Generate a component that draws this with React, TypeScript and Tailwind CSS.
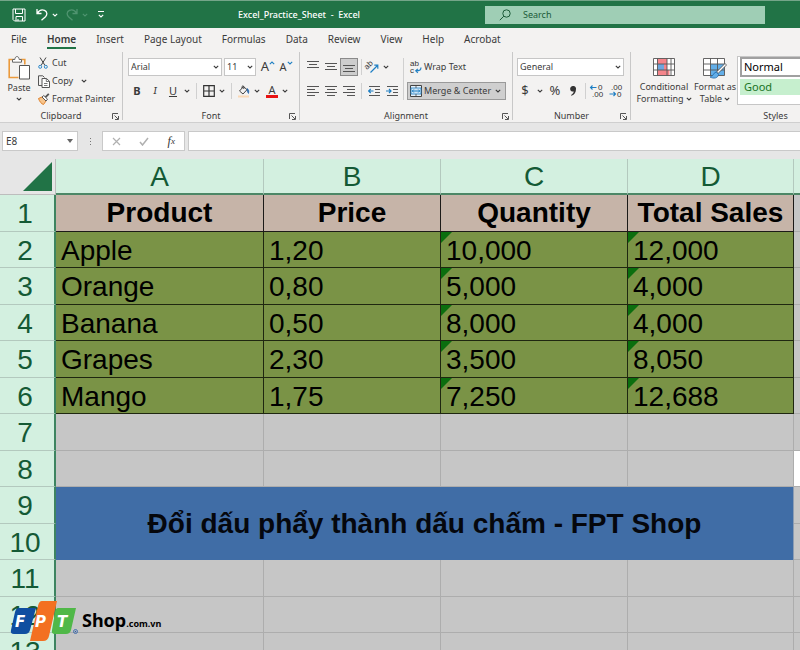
import { ReactNode } from 'react'
import clsx from 'clsx'

const tabs = ['File', 'Home', 'Insert', 'Page Layout', 'Formulas', 'Data', 'Review', 'View', 'Help', 'Acrobat']

const columns = ['A', 'B', 'C', 'D']

const products = [
  ['Apple', '1,20', '10,000', '12,000'],
  ['Orange', '0,80', '5,000', '4,000'],
  ['Banana', '0,50', '8,000', '4,000'],
  ['Grapes', '2,30', '3,500', '8,050'],
  ['Mango', '1,75', '7,250', '12,688'],
]

/* ---------- icons ---------- */

function Chevron({ className }: { className?: string }) {
  return (
    <svg viewBox="0 0 6 4" className={clsx('h-1 w-1.5 shrink-0', className)} fill="none" stroke="currentColor" strokeWidth="1.1">
      <path d="M0.8 0.8 3 3 5.2 0.8" />
    </svg>
  )
}

function SaveIcon() {
  return (
    <svg viewBox="0 0 14 14" className="h-3.5 w-3.5" fill="none" stroke="currentColor">
      <path d="M1 1h12v12H2.5L1 11.5z" />
      <path d="M3.5 1v4.5h7V1M4 13V8.5h6.5V13M6 13v-2" />
    </svg>
  )
}

function UndoIcon({ flip }: { flip?: boolean }) {
  return (
    <svg viewBox="0 0 12 13" className={clsx('h-[13px] w-3', flip && '-scale-x-100')} fill="none" stroke="currentColor" strokeWidth="1.3">
      <path d="M1 1v4.5h4.5M1.3 5.3C3 2.6 6 1.4 8.5 2.4c2.800 1.200 3 4.300 1 6.300L5.500 12.300" />
    </svg>
  )
}

function SearchIcon() {
  return (
    <svg viewBox="0 0 12 12" className="h-3 w-3" fill="none" stroke="currentColor">
      <circle cx="7.500" cy="4.500" r="3.700" />
      <path d="M4.800 7.200 0.800 11.200" />
    </svg>
  )
}

function PasteIcon() {
  return (
    <svg viewBox="0 0 22 24" className="h-6 w-[22px]" fill="none">
      <path d="M6 3.500H1.200v18h9.300M12.500 3.500h4.300v5" stroke="#eb9a3c" strokeWidth="1.600" />
      <path d="M4.500 6.200V3.500h2.300C7 1.500 7.800.6 9 .6s2 .9 2.200 2.900h2.300v2.700z" fill="#fff" stroke="#666" />
      <path d="M11.500 9.500h10V23h-10z" fill="#fff" stroke="#555" />
    </svg>
  )
}

function CutIcon() {
  return (
    <svg viewBox="0 0 10 12" className="h-3 w-2.5" fill="none">
      <path d="M2 .5 7 8.500M8 .5 3 8.500" stroke="#444" />
      <circle cx="2.200" cy="9.800" r="1.500" stroke="#2a86c8" />
      <circle cx="7.800" cy="9.800" r="1.500" stroke="#2a86c8" />
    </svg>
  )
}

function CopyIcon() {
  return (
    <svg viewBox="0 0 12 13" className="h-[13px] w-3" fill="none" stroke="#555">
      <path d="M4 10.500H.5V.8h4.300l1.700 1.700" />
      <path d="M4 3.500h4.500L11.500 6.300v6.200H4z" fill="#fff" />
      <path d="M8.300 3.500v3h3M6 8.500h3.500M6 10.500h3.500" strokeWidth=".8" />
    </svg>
  )
}

function PainterIcon() {
  return (
    <svg viewBox="0 0 12 12" className="h-3 w-3" fill="none">
      <path d="M.5 5.500 4 4l4 4-2.500 3.500C3.500 11 1.500 8.500.5 5.500z" fill="#f6c48c" stroke="#e0812a" />
      <path d="m4 4 1.800-1.500 3.700 3.700L8 8z" fill="#fff" stroke="#555" />
      <path d="M7.500 4.200 10.800.8" stroke="#555" strokeWidth="1.800" />
    </svg>
  )
}

function BordersIcon() {
  return (
    <svg viewBox="0 0 12 12" className="h-3 w-3" fill="none" stroke="#333" strokeWidth="1.200">
      <path d="M.7.7h10.600v10.600H.7zM6 .7v10.600M.7 6h10.600" />
    </svg>
  )
}

function FillIcon() {
  return (
    <svg viewBox="0 0 12 13" className="h-[13px] w-3" fill="none">
      <path d="M5.500 1.500 1.500 6l3.500 3 4-4.300zM4 3.300V1.500q1-1.500 1.800 0v2.500" stroke="#444" />
      <path d="M9 3.500c1.700.8 2.200 2.500 1.500 5-.8-1-1.300-2-1.500-5z" fill="#1d5fa8" stroke="#1d5fa8" strokeWidth=".6" />
      <path d="M0 11.500h11" stroke="#fbd9b5" strokeWidth="2" />
    </svg>
  )
}

function Lines({ rows }: { rows: [number, number][] }) {
  return (
    <svg viewBox="0 0 12 12" className="h-3 w-3" stroke="#555" strokeWidth="1">
      {rows.map(([from, to], i) => (
        <path key={i} d={`M${from} ${i * 3 + 1.5}H${to}`} />
      ))}
    </svg>
  )
}

function IndentIcon({ right }: { right?: boolean }) {
  return (
    <svg viewBox="0 0 12 12" className="h-3 w-3" fill="none">
      <path d="M1 1.500h11M7 4.500h5M7 7.500h5M1 10.500h11" stroke="#555" />
      <path d={right ? 'M0 6h5M3 4l2 2-2 2' : 'M5.500 6H.7M2.700 4l-2 2 2 2'} stroke="#1e7fc4" strokeWidth="1.200" />
    </svg>
  )
}

function OrientationIcon() {
  return (
    <svg viewBox="0 0 14 14" className="size-3.5 overflow-visible" fill="none">
      <text x="2" y="10" fontSize="8" fontFamily="Liberation Sans" fill="#333" transform="rotate(-45 2 10)">
        ab
      </text>
      <path d="M5.500 12.500 12.500 5.500M9.300 5.200h3.500v3.500" stroke="#1e7fc4" strokeWidth="1.200" />
    </svg>
  )
}

function WrapIcon() {
  return (
    <svg viewBox="0 0 12 14" className="h-3.5 w-3 overflow-visible" fill="none">
      <text x="0" y="6" fontSize="8" fontFamily="Liberation Sans" fill="#333">
        ab
      </text>
      <text x="0" y="13" fontSize="8" fontFamily="Liberation Sans" fill="#333">
        c
      </text>
      <path d="M10.800 7.500c.5 2-.8 3.300-5 3.300M7.800 8.800l-2 2 2 2" stroke="#1e7fc4" strokeWidth="1.200" />
    </svg>
  )
}

function MergeIcon() {
  return (
    <svg viewBox="0 0 12 12" className="h-3 w-3" fill="none">
      <path d="M.5.5h11v11H.5z" fill="#e6f1f9" stroke="#444" />
      <path d="M1 3h10v6H1z" fill="#cfe6f6" stroke="#1e7fc4" strokeWidth=".8" />
      <path d="M6 .5V3M6 9v2.500" stroke="#444" strokeWidth=".8" />
      <path d="M2.200 6h7.600M3.800 4.500 2.300 6l1.500 1.500M8.200 4.500 9.700 6 8.200 7.500" stroke="#1e7fc4" />
    </svg>
  )
}

function DecimalIcon({ decrease }: { decrease?: boolean }) {
  return (
    <svg viewBox="0 0 13 14" className="h-3.5 w-[13px] overflow-visible" fill="none">
      <text x={decrease ? 2 : 8} y="6" fontSize="8" fontFamily="Liberation Sans" fill="#333">
        {decrease ? '.00' : '0'}
      </text>
      <text x={decrease ? 8 : 2} y="13" fontSize="8" fontFamily="Liberation Sans" fill="#333">
        {decrease ? '0' : '.00'}
      </text>
      <path d={decrease ? 'M.5 10h6M4.500 8l2 2-2 2' : 'M6.500 3.500h-6M2.500 1.500l-2 2 2 2'} stroke="#1e7fc4" strokeWidth="1.100" />
    </svg>
  )
}

function ConditionalIcon() {
  return (
    <svg viewBox="0 0 22 18" className="h-[18px] w-[22px]" fill="none">
      <path d="M.5.5h21v17H.5z" fill="#fff" />
      <path d="M4.500.5h9.500v5.500H4.500zM4.500 12h12v5.500h-12z" fill="#f5858b" />
      <path d="M4.500 6H11v6H4.500z" fill="#6ea6de" />
      <path d="M11 6h3v6h-3z" fill="#f5858b" />
      <path d="M.5.5h21v17H.5zM.5 6h21M.5 12h21M4.500.5v17M14 .5v17M18 .5v17" stroke="#555" strokeWidth=".9" />
    </svg>
  )
}

function FormatTableIcon() {
  return (
    <svg viewBox="0 0 24 21" className="h-[21px] w-6" fill="none">
      <path d="M.5.5h21v17H.5z" fill="#fff" />
      <path d="M7.500 6h14v11.500h-14z" fill="#62aee8" />
      <path d="M.5.5h21v17H.5zM.5 6h21M.5 12h21M7.500.5v17M14.500.5v17" stroke="#555" strokeWidth=".9" />
      <path d="M22 5.500 13.500 14l1.500 1.500L23.500 7z" fill="#fff" stroke="#444" strokeWidth=".8" />
      <path d="M13.500 14c-3 0-2.500 4-6.500 5 3.500 2 8 1.300 8.500-2.500z" fill="#62aee8" stroke="#1d66a8" strokeWidth=".8" />
    </svg>
  )
}

function LauncherIcon() {
  return (
    <svg viewBox="0 0 7 7" className="h-[7px] w-[7px]" fill="none" stroke="#555">
      <path d="M.5 6V.5H6M2.500 2.500l3.500 3.500M6.500 3v3.500H3" />
    </svg>
  )
}

/* ---------- ribbon parts ---------- */

type ButtonProps = { label: string; children: ReactNode; className?: string }

function IconButton({ label, children, className }: ButtonProps) {
  return (
    <button type="button" aria-label={label} className={clsx('flex h-[18px] shrink-0 items-center justify-center', className)}>
      {children}
    </button>
  )
}

function Divider({ className }: { className?: string }) {
  return <span className={clsx('h-4 w-px shrink-0 bg-[#d0d0d0]', className)} />
}

type GroupProps = { title: string; children: ReactNode; className?: string; launcher?: boolean }

function Group({ title, children, className, launcher = true }: GroupProps) {
  return (
    <section
      aria-label={title}
      className={clsx('relative flex h-[68px] shrink-0 flex-col justify-between border-r border-[#c8c8c8]', className)}
    >
      <div className="flex pt-1.5">{children}</div>
      <h2 className="text-center text-[9px] leading-2">{title}</h2>
      {launcher && (
        <button type="button" aria-label={`${title} settings`} className="absolute right-[3px] bottom-0">
          <LauncherIcon />
        </button>
      )}
    </section>
  )
}

function Dropdown({ label, value, className }: { label: string; value: string; className?: string }) {
  return (
    <span className={clsx('relative flex h-[18px] items-center border border-[#c6c6c6] bg-white', className)}>
      <select aria-label={label} defaultValue={value} className="h-full w-full appearance-none pl-0.5 text-[9px] outline-none">
        <option>{value}</option>
      </select>
      <Chevron className="pointer-events-none absolute right-0.5" />
    </span>
  )
}

function TitleBar() {
  return (
    <header className="flex h-7 shrink-0 items-center border-t border-[#74a589] bg-[#217346] text-white">
      <div className="flex w-[238px] shrink-0 items-center pl-3">
        <IconButton label="Save">
          <SaveIcon />
        </IconButton>
        <IconButton label="Undo" className="ml-2.5 gap-1">
          <UndoIcon />
          <Chevron />
        </IconButton>
        <IconButton label="Redo" className="ml-2 gap-1 text-[#4f9470]">
          <UndoIcon flip />
          <Chevron />
        </IconButton>
        <IconButton label="Customize toolbar" className="ml-2.5 flex-col gap-0.5">
          <span className="h-px w-1.5 bg-white" />
          <Chevron />
        </IconButton>
      </div>
      <h1 className="w-[247px] shrink-0 text-[9px] font-medium whitespace-pre">Excel_Practice_Sheet  -  Excel</h1>
      <label className="mr-[35px] flex h-[18px] min-w-0 flex-1 items-center gap-3 bg-[#9fceb5] pl-3.5 text-[#1c5b39]">
        <SearchIcon />
        <input
          type="search"
          aria-label="Search"
          placeholder="Search"
          className="min-w-0 flex-1 text-[9px] outline-none placeholder:text-[#1c5b39]"
        />
      </label>
    </header>
  )
}

function TabBar() {
  return (
    <nav className="flex h-6 shrink-0 items-center gap-5 pl-[11px] text-[10px] whitespace-nowrap">
      {tabs.map((tab) => (
        <a
          key={tab}
          href="#"
          className={clsx('border-b-2 leading-4', tab === 'Home' ? 'border-[#217346] font-semibold' : 'border-transparent')}
        >
          {tab}
        </a>
      ))}
    </nav>
  )
}

function Ribbon() {
  return (
    <div className="flex h-[71px] shrink-0 overflow-hidden border-b border-[#cfcfcf] text-[9px] whitespace-nowrap">
      <Group title="Clipboard" className="w-[123px]">
        <button type="button" className="-mt-0.5 flex w-[38px] flex-col items-center leading-3">
          <PasteIcon />
          <span className="mt-0.5">Paste</span>
          <Chevron className="mt-[3px]" />
        </button>
        <div className="-mt-1 flex flex-col">
          <button type="button" className="flex h-[18px] items-center gap-1">
            <CutIcon />
            Cut
          </button>
          <button type="button" className="flex h-[18px] items-center gap-0.5">
            <CopyIcon />
            Copy
            <Chevron className="ml-1.5" />
          </button>
          <button type="button" className="flex h-[18px] items-center gap-0.5">
            <PainterIcon />
            Format Painter
          </button>
        </div>
      </Group>

      <Group title="Font" className="w-[177px]">
        <div className="flex flex-col gap-1.5 pl-[5px]">
          <div className="flex gap-0.5">
            <Dropdown label="Font name" value="Arial" className="w-[94px]" />
            <Dropdown label="Font size" value="11" className="w-8" />
            <IconButton label="Increase font size" className="ml-0.5 w-4 text-[13px]">
              A<Chevron className="mb-2 rotate-180 text-[#1e7fc4]" />
            </IconButton>
            <IconButton label="Decrease font size" className="w-4 text-[11px]">
              A<Chevron className="mb-2 text-[#1e7fc4]" />
            </IconButton>
          </div>
          <div className="flex items-center">
            <IconButton label="Bold" className="w-[18px] text-[11px] font-bold">
              B
            </IconButton>
            <IconButton label="Italic" className="w-[18px] font-serif text-[11px] italic">
              I
            </IconButton>
            <IconButton label="Underline" className="w-[18px] text-[11px] underline">
              U
            </IconButton>
            <Chevron className="ml-0.5" />
            <Divider className="mx-1.5" />
            <IconButton label="Borders" className="gap-1">
              <BordersIcon />
              <Chevron />
            </IconButton>
            <Divider className="mx-1.5" />
            <IconButton label="Fill color" className="gap-1">
              <FillIcon />
              <Chevron />
            </IconButton>
            <IconButton label="Font color" className="ml-1.5 gap-1">
              <span className="h-[13px] w-3 border-b-3 border-[#e81313] text-[11px] leading-[10px]">A</span>
              <Chevron />
            </IconButton>
          </div>
        </div>
      </Group>

      <Group title="Alignment" className="w-[213px]">
        <div className="flex flex-col gap-1.5 pl-1">
          <div className="flex items-center">
            <IconButton label="Top align" className="w-[18px] pb-0.5">
              <Lines rows={[[0, 12], [2, 10], [0, 12]]} />
            </IconButton>
            <IconButton label="Middle align" className="w-[18px] pt-0.5">
              <Lines rows={[[0, 12], [2, 10], [0, 12]]} />
            </IconButton>
            <IconButton label="Bottom align" className="w-[18px] border border-[#8a8a8a] bg-[#cdcdcd] pt-1.5">
              <Lines rows={[[0, 12], [2, 10], [0, 12]]} />
            </IconButton>
            <Divider className="mx-[3px]" />
            <IconButton label="Orientation" className="gap-1">
              <OrientationIcon />
              <Chevron />
            </IconButton>
          </div>
          <div className="flex items-center">
            <IconButton label="Align left" className="w-[18px]">
              <Lines rows={[[0, 12], [0, 8], [0, 12], [0, 8]]} />
            </IconButton>
            <IconButton label="Center" className="w-[18px]">
              <Lines rows={[[0, 12], [2, 10], [0, 12], [2, 10]]} />
            </IconButton>
            <IconButton label="Align right" className="w-[18px]">
              <Lines rows={[[0, 12], [4, 12], [0, 12], [4, 12]]} />
            </IconButton>
            <Divider className="mx-[3px]" />
            <IconButton label="Decrease indent" className="w-[18px]">
              <IndentIcon />
            </IconButton>
            <IconButton label="Increase indent" className="w-[18px]">
              <IndentIcon right />
            </IconButton>
          </div>
        </div>
        <div className="ml-0.5 flex flex-col gap-1.5 border-l border-[#d0d0d0] pl-[3px]">
          <button type="button" className="flex h-[18px] items-center gap-0.5 pl-[3px]">
            <WrapIcon />
            Wrap Text
          </button>
          <button type="button" className="flex h-[18px] w-[99px] items-center gap-0.5 border border-[#9a9a9a] bg-[#cfcfcf] pl-0.5">
            <MergeIcon />
            Merge &amp; Center
            <Chevron className="mr-1 ml-auto" />
          </button>
        </div>
      </Group>

      <Group title="Number" className="w-[118px]">
        <div className="flex flex-col gap-1.5 pl-1">
          <Dropdown label="Number format" value="General" className="w-[107px]" />
          <div className="flex items-center">
            <IconButton label="Currency" className="w-4 text-[13px]">
              $
            </IconButton>
            <Chevron className="ml-1" />
            <IconButton label="Percent" className="ml-1 w-4 text-[13px]">
              %
            </IconButton>
            <IconButton label="Comma style" className="w-5">
              <svg viewBox="0 0 6 10" className="h-2.5 w-1.5" fill="#333">
                <path d="M3 0a2.700 2.700 0 0 1 3 3c0 3.300-1.500 5.500-4.500 6.800L1 9c1.800-1 2.600-2.200 2.700-3.500A2.800 2.800 0 1 1 3 0z" />
              </svg>
            </IconButton>
            <Divider className="ml-0.5" />
            <IconButton label="Increase decimal" className="w-5">
              <DecimalIcon />
            </IconButton>
            <IconButton label="Decrease decimal" className="w-[18px]">
              <DecimalIcon decrease />
            </IconButton>
          </div>
        </div>
      </Group>

      <Group title="Styles" className="w-[290px]" launcher={false}>
        <button type="button" className="flex w-[66px] flex-col items-center leading-3">
          <ConditionalIcon />
          <span className="mt-[5px]">Conditional</span>
          <span className="flex items-center gap-0.5">
            Formatting
            <Chevron />
          </span>
        </button>
        <button type="button" className="flex w-9 flex-col items-center leading-3">
          <FormatTableIcon />
          <span className="mt-0.5">Format as</span>
          <span className="flex items-center gap-0.5">
            Table
            <Chevron />
          </span>
        </button>
        <div className="-mt-0.5 ml-1 flex w-[180px] flex-col gap-0.5 border border-[#c6c6c6] bg-white pb-1 pl-0.5 text-[11px]">
          <button type="button" className="h-5 border-2 border-[#a0a0a0] bg-white pl-0.5 text-left leading-3 text-black">
            Normal
          </button>
          <button type="button" className="h-4 bg-[#c6efce] pl-1 text-left leading-3 text-[#1a7425]">
            Good
          </button>
        </div>
      </Group>
    </div>
  )
}

function FormulaBar() {
  return (
    <div className="flex h-9 shrink-0 bg-[#e6e6e6] pt-2 pb-2">
      <label className="relative ml-0.5 flex w-[76px] items-center border border-[#c9c9c9] bg-white">
        <input aria-label="Name box" defaultValue="E8" className="w-full pl-[3px] text-[10px] outline-none" />
        <svg viewBox="0 0 6 4" className="absolute right-1 h-1 w-1.5" fill="#666">
          <path d="M0 0h6L3 4z" />
        </svg>
      </label>
      <span className="flex w-6 flex-col items-center justify-center gap-0.5">
        <i className="size-px bg-[#777]" />
        <i className="size-px bg-[#777]" />
        <i className="size-px bg-[#777]" />
      </span>
      <div className="flex w-[83px] items-center justify-around border border-[#c9c9c9] bg-white text-[#b0b0b0]">
        <IconButton label="Cancel">
          <svg viewBox="0 0 9 9" className="size-[9px]" fill="none" stroke="currentColor" strokeWidth="1.200">
            <path d="m1 1 7 7M8 1 1 8" />
          </svg>
        </IconButton>
        <IconButton label="Enter">
          <svg viewBox="0 0 10 9" className="h-[9px] w-2.5" fill="none" stroke="currentColor" strokeWidth="1.500">
            <path d="m1 5 2.500 3L9 1" />
          </svg>
        </IconButton>
        <IconButton label="Insert function" className="font-['Liberation_Serif',serif] text-[12px] text-[#333] italic">
          f<span className="pt-0.5 text-[9px]">x</span>
        </IconButton>
      </div>
      <input aria-label="Formula" className="ml-[3px] min-w-0 flex-1 border border-r-0 border-[#c9c9c9] bg-white px-1 text-[10px] outline-none" />
    </div>
  )
}

/* ---------- sheet ---------- */

function RowHeader({ n }: { n: number }) {
  return (
    <th
      scope="row"
      className="border-r-2 border-b border-r-[#3d8460] border-b-[#b3c9be] bg-[#d3f0e0] pt-0.5 pr-1 pb-0 pl-0 font-normal text-[#145a35]"
    >
      {n}
    </th>
  )
}

function EdgeCell({ active }: { active?: boolean }) {
  return <td className={clsx('border-b border-[#adadad]', active ? 'bg-white' : 'bg-[#c6c6c6]')} />
}

function EmptyRow({ n, active }: { n: number; active?: boolean }) {
  return (
    <tr className="h-[37px] even:h-9">
      <RowHeader n={n} />
      {columns.map((col) => (
        <td key={col} className="border-r border-b border-[#adadad] bg-[#c6c6c6]" />
      ))}
      <EdgeCell active={active} />
    </tr>
  )
}

function Sheet() {
  return (
    <table className="w-full table-fixed border-separate border-spacing-0 font-['Liberation_Sans',Arial,sans-serif] text-[28px] leading-8 text-black">
      <colgroup>
        <col className="w-14" />
        <col className="w-52" />
        <col className="w-[177px]" />
        <col className="w-[187px]" />
        <col className="w-[166px]" />
        <col />
      </colgroup>
      <thead>
        <tr className="h-9">
          <td className="border-r border-b border-[#bdbdbd] bg-[#e6e6e6] p-0">
            <svg viewBox="0 0 30 30" className="mr-[3px] ml-auto size-[29px]" fill="#217346">
              <path d="M30 0v30H0z" />
            </svg>
          </td>
          {columns.map((col) => (
            <th
              key={col}
              scope="col"
              className="border-r border-b-2 border-r-[#b3c9be] border-b-[#4c8766] bg-[#d3f0e0] px-0 pt-0.5 pb-0 font-normal text-[#145a35]"
            >
              {col}
            </th>
          ))}
          <td className="border-b-2 border-[#4c8766] bg-[#d3f0e0]" />
        </tr>
      </thead>
      <tbody>
        <tr className="h-[37px]">
          <RowHeader n={1} />
          {['Product', 'Price', 'Quantity', 'Total Sales'].map((title) => (
            <th
              key={title}
              scope="col"
              className="border-r border-b border-[#1c1a18] bg-[#c6b4a8] p-0 font-bold whitespace-nowrap"
            >
              {title}
            </th>
          ))}
          <EdgeCell />
        </tr>
        {products.map((row, i) => (
          <tr key={row[0]} className="h-[37px] even:h-9">
            <RowHeader n={i + 2} />
            {row.map((value, j) => (
              <td key={j} className="relative border-r border-b border-[#1f2710] bg-[#7a9346] pt-0.5 pr-0 pb-0 pl-[5px]">
                {j > 1 && (
                  <svg viewBox="0 0 11 11" className="absolute top-0 left-0 size-[11px]" fill="#0b6e0e">
                    <path d="M0 0h11L0 11z" />
                  </svg>
                )}
                {value}
              </td>
            ))}
            <EdgeCell />
          </tr>
        ))}
        <EmptyRow n={7} />
        <EmptyRow n={8} active />
        <tr className="h-[37px]">
          <RowHeader n={9} />
          <td colSpan={4} rowSpan={2} className="border-r border-[#8d9db3] bg-[#406da6] p-0 text-center font-bold text-[#05070d]">
            Đổi dấu phẩy thành dấu chấm - FPT Shop
          </td>
          <EdgeCell />
        </tr>
        <tr className="h-9">
          <RowHeader n={10} />
          <EdgeCell />
        </tr>
        <EmptyRow n={11} />
        <EmptyRow n={12} />
        <EmptyRow n={13} />
      </tbody>
    </table>
  )
}

function ShopLogo() {
  return (
    <a href="#" aria-label="FPT Shop" className="absolute bottom-2 left-2.5 flex items-center text-black">
      <svg viewBox="0 0 68 42" className="h-[42px] w-[68px]">
        <path d="M9 8h17l-6 22q-1 4-5 4H4q-4 0-3-4L5 12q1-4 4-4z" fill="#0f4ea0" />
        <path d="M32 1h15l-8 35q-1 5-6 5H20l8-35q1-5 4-5z" fill="#f37021" />
        <path d="M48 8h18l-5 22q-1 4-5 4H45q-4 0-3-4l3-18q1-4 3-4z" fill="#50b848" />
        <g fill="#fff" fontFamily="DejaVu Sans" fontSize="15" fontWeight="bold" fontStyle="italic">
          <text x="5" y="27">F</text>
          <text x="25" y="27">P</text>
          <text x="47" y="27">T</text>
        </g>
        <circle cx="65.500" cy="31.500" r="2" fill="none" stroke="#2b5ea8" strokeWidth=".8" />
        <circle cx="65.500" cy="31.500" r=".8" fill="#2b5ea8" />
      </svg>
      <span className="mb-0.5 ml-1 flex items-baseline font-bold">
        <span className="text-[18px] leading-5">Shop</span>
        <span className="text-[9px]">.com.vn</span>
      </span>
    </a>
  )
}

export default function App() {
  return (
    <div className="relative flex h-screen flex-col overflow-hidden bg-[#f3f2f1] font-['Noto_Sans','Open_Sans',sans-serif] text-[#3b3b3b]">
      <TitleBar />
      <TabBar />
      <Ribbon />
      <FormulaBar />
      <main className="min-h-0 flex-1 overflow-hidden bg-[#c6c6c6]">
        <Sheet />
      </main>
      <ShopLogo />
    </div>
  )
}
